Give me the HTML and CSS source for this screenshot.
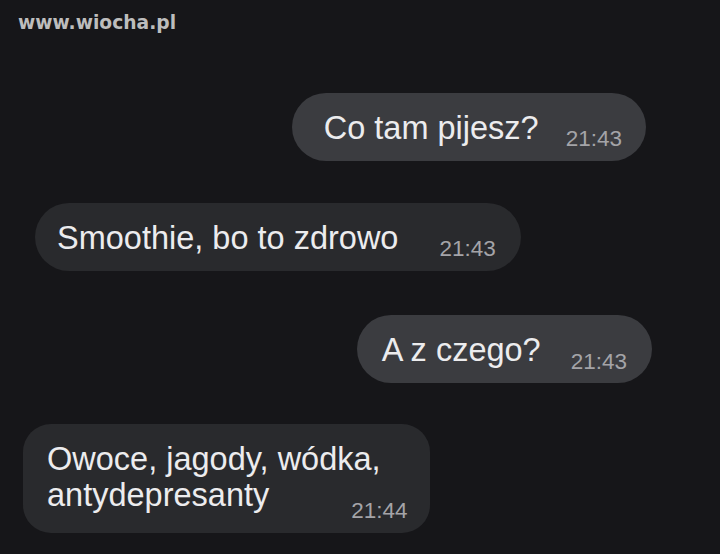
FILE: index.html
```
<!DOCTYPE html>
<html lang="pl">
<head>
<meta charset="utf-8">
<title>Czat</title>
<link rel="stylesheet" href="styles.css">
</head>
<body>
<div class="screen">
  <div class="watermark">www.wiocha.pl</div>
  <div class="chat">
    <div class="bubble out b1"><span class="text">Co tam pijesz?</span><span class="time">21:43</span></div>
    <div class="bubble in b2"><span class="text">Smoothie, bo to zdrowo</span><span class="time">21:43</span></div>
    <div class="bubble out b3"><span class="text">A z czego?</span><span class="time">21:43</span></div>
    <div class="bubble in b4 multi"><span class="text">Owoce, jagody, wódka,</span> <span class="text">antydepresanty</span><span class="time">21:44</span></div>
  </div>
</div>
</body>
</html>
```
FILE: styles.css
```
html, body {
  margin: 0;
  padding: 0;
  background: #161619;
}

.screen {
  position: relative;
  width: 720px;
  height: 554px;
  overflow: hidden;
  background: #161619;
  font-family: "Liberation Sans", Arial, sans-serif;
}

.watermark {
  position: absolute;
  left: 18px;
  top: 8px;
  font-family: "DejaVu Sans", Verdana, sans-serif;
  font-weight: bold;
  font-size: 18.7px;
  line-height: 30px;
  color: #bdbdbd;
}

.chat {
  display: flex;
  flex-direction: column;
  gap: 42px;
  padding-top: 93px;
}

.bubble {
  box-sizing: border-box;
  height: 68px;
  padding: 17px 24px 15px 24px;
  border-radius: 34px;
  white-space: nowrap;
  font-size: 32.5px;
  line-height: 36px;
  color: #ececee;
}

.out {
  align-self: flex-end;
  background: #3b3c40;
}

.in {
  align-self: flex-start;
  background: #292a2d;
}

.time {
  display: inline-block;
  font-size: 22.5px;
  line-height: 16px;
  vertical-align: -7px;
  color: #a4a4a8;
}

.b1 {
  margin-right: 74px;
  padding-left: 32px;
}
.b1 .time { margin-left: 27px; }

.b2 {
  margin-left: 35px;
  padding-left: 22px;
  padding-right: 25px;
}
.b2 .time { margin-left: 41px; }

.b3 {
  margin-right: 68px;
  margin-top: 2px;
  padding-left: 25px;
  padding-right: 25px;
}
.b3 .time { margin-left: 30px; vertical-align: -8px; }

.b4 {
  margin-left: 23px;
  margin-top: -1px;
}

.multi {
  width: 407px;
  height: 109px;
  padding: 17px 18px 0 24px;
  border-radius: 28px;
  white-space: normal;
}

.multi .text {
  white-space: nowrap;
}

.multi .time {
  line-height: 0;
  margin-left: 82px;
  vertical-align: -12px;
}
```
